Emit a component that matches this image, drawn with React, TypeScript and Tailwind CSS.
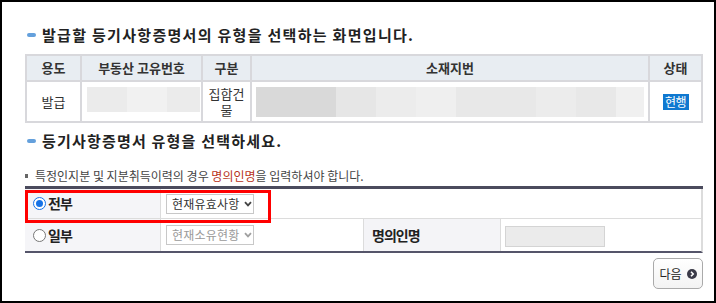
import React from "react";

const font = "font-['Noto_Sans_CJK_KR','Noto_Sans',sans-serif]";

const Title = ({ children, tracking }: { children: React.ReactNode; tracking: string }) => (
  <div className="flex items-center h-[20px]">
    <span className="ml-[2px] mr-[6px] w-[9px] h-[4px] rounded-full bg-[#64a0dc]" />
    <h2 className={`text-[15px] leading-[20px] font-bold text-[#222] ${tracking}`}>{children}</h2>
  </div>
);

const Chevron = ({ color }: { color: string }) => (
  <svg width="8" height="6" viewBox="0 0 8 6" className="shrink-0">
    <path d="M1 1.2 L4 4.4 L7 1.2" fill="none" stroke={color} strokeWidth="1.8" />
  </svg>
);

const Select = ({ value, disabled }: { value: string; disabled?: boolean }) => (
  <div className="flex items-center w-[88px] h-[20px] border border-[#c8c8c8] bg-white pl-[5px] pr-[1px]">
    <span
      className={`flex-1 overflow-hidden whitespace-nowrap text-[12px] leading-[18px] tracking-[0.2px] ${
        disabled ? "text-[#9a9a9a]" : "text-[#333]"
      }`}
    >
      {value}
    </span>
    <Chevron color={disabled ? "#a0a0a0" : "#444"} />
  </div>
);

const Radio = ({ checked }: { checked?: boolean }) =>
  checked ? (
    <span className="flex items-center justify-center w-[13px] h-[13px] rounded-full border-[1.5px] border-[#1672e6] bg-white">
      <span className="w-[7px] h-[7px] rounded-full bg-[#1672e6]" />
    </span>
  ) : (
    <span className="w-[13px] h-[13px] rounded-full border border-[#777] bg-white" />
  );

const headCell = "flex items-center justify-center bg-[#e8edf2] text-[13px] font-bold text-[#333]";
const bodyCell = "bg-white text-[13px] text-[#333]";

export default function App() {
  return (
    <div
      className={`w-[716px] h-[303px] border-2 border-black bg-white pl-[23px] pr-[11px] pt-[23px] ${font} text-[#333]`}
    >
      <Title tracking="tracking-[1.3px]">발급할 등기사항증명서의 유형을 선택하는 화면입니다.</Title>

      {/* 발급 대상 정보 */}
      <div className="mt-[9px] grid grid-cols-[53px_119px_47px_396px_51px] grid-rows-[24px_39px] gap-[2px] p-[2px] bg-[#d8d8dc]">
        <div className={headCell}>용도</div>
        <div className={headCell}>부동산 고유번호</div>
        <div className={headCell}>구분</div>
        <div className={headCell}>소재지번</div>
        <div className={headCell}>상태</div>

        <div className={`${bodyCell} flex items-center justify-center`}>발급</div>
        <div className={`${bodyCell} pt-[5px] pl-[5px]`}>
          <div className="flex w-[113px] h-[25px] bg-[#ebebeb]">
            <div className="w-[40px]" />
            <div className="w-[40px] bg-[#f1f1f1]" />
          </div>
        </div>
        <div className={`${bodyCell} flex items-center justify-center text-center leading-[16px] px-[3px]`}>
          집합건물
        </div>
        <div className={`${bodyCell} pt-[5px] pl-[4px]`}>
          <div className="flex w-[388px] h-[30px]">
            <div className="w-[80px] bg-[#d9d9d9]" />
            <div className="w-[40px] bg-[#e6e6e6]" />
            <div className="w-[40px] bg-[#ececec]" />
            <div className="w-[40px] bg-[#efefef]" />
            <div className="w-[80px] bg-[#e8e8e8]" />
            <div className="w-[40px] bg-[#ececec]" />
            <div className="w-[40px] bg-[#e8e8e8]" />
            <div className="flex-1 bg-[#f0f0f0]" />
          </div>
        </div>
        <div className={`${bodyCell} flex items-center justify-center`}>
          <span className="flex items-center justify-center w-[26px] h-[16px] bg-[#0f78d0] text-white text-[12px] tracking-[-0.5px]">
            현행
          </span>
        </div>
      </div>

      <div className="mt-[8px]">
        <Title tracking="tracking-[1.2px]">등기사항증명서 유형을 선택하세요.</Title>
      </div>

      <div className="mt-[17px] flex items-center h-[16px]">
        <span className="w-[3px] h-[4px] bg-[#666] mr-[7px]" />
        <p className="text-[12px] leading-[16px] text-[#444]">
          특정인지분 및 지분취득이력의 경우 <span className="text-[#b83220]">명의인명</span>을 입력하셔야 합니다.
        </p>
      </div>

      {/* 유형 선택 */}
      <div className="relative mt-[2px] border-t-[3px] border-[#4b4b5d]">
        <div className="flex h-[30px] border-b border-r-2 border-[#dcdcdc]">
          <div className="flex items-center gap-[2px] w-[136px] pl-[8px] bg-[#f5f5f8] border-r border-[#dcdcdc]">
            <Radio checked />
            <span className="text-[14px] font-bold tracking-[-1px] text-[#222]">전부</span>
          </div>
          <div className="flex items-center pl-[5px]">
            <Select value="현재유효사항" />
          </div>
        </div>
        <div className="flex h-[34px] border-b-2 border-b-[#55556a] border-r-2 border-r-[#dcdcdc]">
          <div className="flex items-center gap-[2px] w-[136px] pl-[8px] bg-[#f5f5f8] border-r border-[#dcdcdc]">
            <Radio />
            <span className="text-[14px] font-bold tracking-[-1px] text-[#222]">일부</span>
          </div>
          <div className="flex items-center w-[203px] pl-[5px] border-r border-[#dcdcdc]">
            <Select value="현재소유현황" disabled />
          </div>
          <div className="flex items-center w-[137px] pl-[8px] bg-[#f4f4f7] border-r border-[#dcdcdc]">
            <span className="text-[14px] font-bold tracking-[-1px] text-[#222]">명의인명</span>
          </div>
          <div className="flex items-center pl-[4px] pt-[3px]">
            <div className="w-[100px] h-[21px] bg-[#ebebeb] border border-[#d4d4d4]" />
          </div>
        </div>

        {/* 선택 강조 */}
        <div className="absolute top-[1px] left-0 w-[246px] h-[33px] border-[3px] border-[#ff0000] pointer-events-none" />
      </div>

      <div className="mt-[5px] flex justify-end">
        <button className="flex items-center justify-center gap-[5px] w-[50px] h-[31px] rounded-[5px] border border-[#aaa] bg-gradient-to-b from-white to-[#f3f3f3] text-[12px] text-[#222]">
          다음
          <svg width="10" height="10" viewBox="0 0 10 10">
            <circle cx="5" cy="5" r="5" fill="#3a3a48" />
            <path d="M4 2.8 L6.2 5 L4 7.2" fill="none" stroke="#fff" strokeWidth="1.6" />
          </svg>
        </button>
      </div>
    </div>
  );
}
